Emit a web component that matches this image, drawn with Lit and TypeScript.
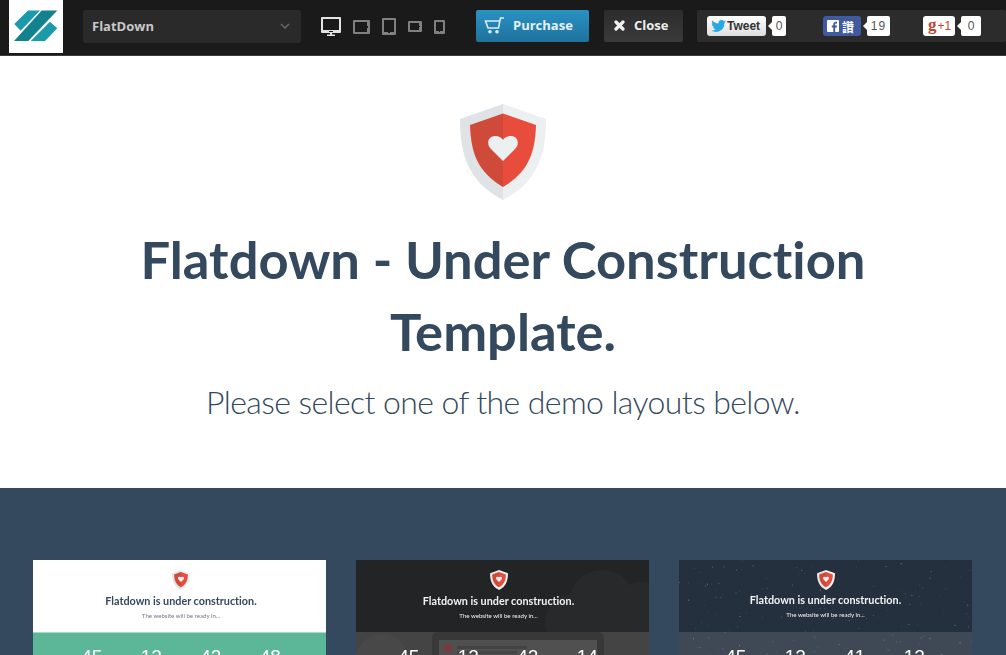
import { LitElement, html, css, svg } from "lit";
import { customElement } from "lit/decorators.js";

const shield = (w: number, h: number, outerL = "#dfe3e5", outerR = "#ecf0f1") => svg`
<svg class="shield" width=${w} height=${h} viewBox="0 0 86 96">
  <path d="M43 0 L0 15 C0 50 8 78 43 96 Z" fill=${outerL}/>
  <path d="M43 0 L86 15 C86 50 78 78 43 96 Z" fill=${outerR}/>
  <path d="M43 9.500 L10 21 C11 50 18 68 43 83 Z" fill="#d04a3a"/>
  <path d="M43 9.500 L76 21 C75 50 68 68 43 83 Z" fill="#e74c3c"/>
  <path d="M43 57 L31 45 C26 40 28 32 35 32 C39 32 42 34 43 36 C44 34 47 32 51 32 C58 32 60 40 55 45 Z" fill="#ecf0f1"/>
</svg>`;

const device = (w: number, h: number, dotX: number, dotY: number, dw: number, dh: number) => svg`
<svg width=${w} height=${h} viewBox="0 0 ${w} ${h}">
  <rect width=${w} height=${h} rx="1" fill="#808080"/>
  <rect x="2" y="2" width=${dotX >= w - 3 ? w - 5 : w - 4} height=${dotY >= h - 3 ? h - 5 : h - 4} fill="#1a1a1a"/>
  <rect x=${dotX} y=${dotY} width=${dw} height=${dh} fill="#1a1a1a"/>
</svg>`;

const stars = () => {
  let s = 17;
  const r = () => (s = (s * 16807) % 2147483647) / 2147483647;
  const dots = Array.from({ length: 170 }, () => ({ x: r() * 293, y: r() * 95, o: 0.08 + r() * 0.3, d: 0.3 + r() * 0.35 }));
  return svg`<svg class="stars" width="293" height="95" viewBox="0 0 293 95">
    ${dots.map((p) => svg`<circle cx=${p.x} cy=${p.y} r=${p.d} fill="#fff" opacity=${p.o}/>`)}
  </svg>`;
};

@customElement("app-root")
export class AppRoot extends LitElement {
  static styles = css`
    :host { display: block; height: 655px; overflow: hidden; font-family: "Lato", sans-serif; background: #fff; }
    .bar { height: 56px; box-sizing: border-box; background: #1a1a1a; border-bottom: 1px solid #3c3c3c; display: flex; align-items: flex-start; padding-left: 9px; font-family: "Open Sans", sans-serif; }
    .logo { width: 54px; height: 53px; background: #fff; flex: none; }
    .logo svg { display: block; }
    .select { width: 218px; height: 33px; margin: 10px 0 0 20px; padding: 0 11px 2px 9px; box-sizing: border-box; background: #2a2a2a; border-radius: 3px; color: #c8c8c8; font-size: 13px; font-weight: 700; display: flex; align-items: center; justify-content: space-between; }
    .devices { display: flex; align-items: center; gap: 12px; height: 35px; margin: 9px 0 0 20px; width: 155px; flex: none; }
    .devices svg { display: block; flex: none; }
    .btn { height: 32px; margin-top: 10px; padding-bottom: 2px; box-sizing: border-box; border-radius: 2px; color: #eee; font-size: 13px; font-weight: 700; display: flex; align-items: center; flex: none; }
    .purchase { width: 113px; background: linear-gradient(#2a92c4, #1f729c); padding-left: 8px; gap: 9px; color: #e6f0f5; }
    .close { width: 79px; background: linear-gradient(#2c2c2c, #3a3a3a); margin-left: 15px; padding-left: 10px; gap: 9px; }
    .share { width: 309px; height: 32px; margin: 10px 0 0 14px; background: #2c2c2c; border-radius: 2px; flex: none; font-family: "Liberation Sans", sans-serif; display: flex; align-items: center; padding-left: 10px; box-sizing: border-box; }
    .sb { height: 20px; border-radius: 3px; display: flex; align-items: center; box-sizing: border-box; flex: none; }
    .tw { width: 59px; background: linear-gradient(#fff, #dedede); color: #333; font-size: 12px; font-weight: 700; gap: 1px; padding-left: 4px; }
    .fb { width: 38px; background: #3f5a9e; color: #fff; font-size: 12px; gap: 3px; padding-left: 4px; margin-left: 37px; font-family: "Noto Sans CJK TC", sans-serif; font-weight: 700; }
    .gp { width: 32px; background: #fff; color: #c8402f; font-size: 12px; padding-left: 5px; margin-left: 33px; gap: 1px; }
    .gp b { font-family: "Liberation Serif", serif; font-weight: 700; font-size: 17px; line-height: 16px; margin-top: -3px; }
    .count { height: 20px; background: #fff; border-radius: 2px; color: #555; font-size: 12px; display: flex; align-items: center; justify-content: center; position: relative; box-sizing: border-box; flex: none; }
    .count::before { content: ""; position: absolute; left: -4px; top: 6px; border: 4px solid transparent; border-left: 0; border-right-color: #fff; }
    .c1 { width: 14px; margin-left: 6px; }
    .c2 { width: 23px; margin-left: 6px; letter-spacing: 1px; }
    .c3 { width: 20px; margin-left: 6px; }
    .hero { height: 432px; box-sizing: border-box; padding-top: 48px; text-align: center; color: #34495e; }
    .hero .shield { display: block; margin: 0 auto; }
    h1 { margin: 23px auto 0; font-size: 52.500px; line-height: 72px; font-weight: 700; width: 800px; font-variant-ligatures: none; }
    .sub { margin: 13px 0 0; font-size: 32px; line-height: 44px; font-weight: 300; letter-spacing: -0.6px; }
    .demos { background: #34495e; padding: 72px 34px 0 33px; height: 167px; box-sizing: border-box; display: flex; gap: 30px; overflow: hidden; }
    .card { width: 293px; flex: none; height: 300px; position: relative; overflow: hidden; text-align: center; }
    .top { height: 72px; box-sizing: border-box; padding-top: 10px; position: relative; }
    .top .shield { display: block; margin: 0 auto; filter: blur(.3px); }
    .title { font-size: 10.800px; font-weight: 700; line-height: 14px; margin-top: 4px; filter: blur(.3px); font-variant-ligatures: none; }
    .tag { font-size: 6.100px; line-height: 8px; font-weight: 400; margin-top: 4px; filter: blur(.25px); }
    .nums { height: 228px; display: flex; padding-top: 14px; box-sizing: border-box; font-family: "Liberation Sans", sans-serif; font-size: 19px; line-height: 22px; color: #fff; font-weight: 400; position: relative; }
    .nums span { width: 59.500px; text-align: center; position: relative; filter: blur(.3px); }
    .c-a { background: #fff; }
    .c-a .top { color: #34495e; padding-left: 3px; }
    .c-a .tag { color: #778; }
    .c-a .nums { background: #5cb798; border-top: 1px solid #a8dcc8; padding-top: 13px; padding-left: 29px; }
    .c-b { background: #222426; }
    .c-b .top, .c-c .top { color: #f2f2f2; }
    .c-b .top { padding-right: 8px; }
    .c-b .nums { background: #444; padding-left: 23px; }
    .cloud { position: absolute; border-radius: 50%; background: #28292b; }
    .cl1 { width: 66px; height: 66px; left: 213px; top: 10px; }
    .cl2 { width: 56px; height: 56px; left: 189px; top: 34px; }
    .cl3 { width: 60px; height: 60px; left: 256px; top: 22px; }
    .cl4 { width: 56px; height: 60px; left: -2px; top: 2px; background: #484848; }
    .tablet { position: absolute; left: 76px; top: 0; width: 172px; height: 120px; background: #383838; border-radius: 6px 6px 0 0; }
    .screen { position: absolute; left: 7px; top: 8px; right: 7px; height: 110px; background: #505050; filter: blur(.3px); }
    .red { position: absolute; left: 5px; top: 5px; width: 8px; height: 7px; background: #7a3a3a; }
    .ln { position: absolute; left: 18px; top: 6px; width: 70px; height: 3px; background: #444; }
    .ln2 { top: 11px; width: 60px; }
    .c-c { background: #25303e; }
    .stars { position: absolute; left: 0; top: 0; }
    .c-c .title { margin-top: 3px; }
    .c-c .nums { background: rgba(255,255,255,.12); padding-left: 27px; }
  `;

  private card(cls: string, nums: string[], extra: unknown = null) {
    return html`<div class="card ${cls}">
      ${extra}
      <div class="top">
        ${shield(18, 20, cls === "c-a" ? "#dfe3e5" : "#e6e8ea", cls === "c-a" ? "#ecf0f1" : "#f4f5f6")}
        <div class="title">Flatdown is under construction.</div>
        <div class="tag">The website will be ready in...</div>
      </div>
      <div class="nums">
        ${cls === "c-b" ? html`<div class="tablet"><div class="screen"><div class="red"></div><div class="ln"></div><div class="ln ln2"></div></div></div><div class="cloud cl4"></div>` : null}
        ${nums.map((n) => html`<span>${n}</span>`)}
      </div>
    </div>`;
  }

  render() {
    return html`
      <div class="bar">
        <div class="logo">
          <svg width="54" height="53" viewBox="0 0 54 53">
            <path d="M5.300 24 L19 10.500 L31 10.500 L11.700 30.700 Z" fill="#1a9aaa"/>
            <path d="M5 41 L32.700 10.500 L48.300 10.500 L19.300 41 Z" fill="#14818e"/>
            <path d="M21.700 41 L41 21.700 L48.300 28.300 L36 41 Z" fill="#1a9aaa"/>
          </svg>
        </div>
        <div class="select">FlatDown
          <svg width="10" height="6" viewBox="0 0 10 6"><path d="M1 1 L5 5 L9 1" fill="none" stroke="#666" stroke-width="1.500"/></svg>
        </div>
        <div class="devices">
          <svg width="20" height="19" viewBox="0 0 20 19"><rect width="20" height="16" rx="1" fill="#e4e4e4"/><rect x="2" y="2" width="16" height="11" fill="#1a1a1a"/><rect x="8" y="14" width="4" height="1" fill="#1a1a1a"/><path d="M9 16h2v1.500h3V19H6v-1.500h3z" fill="#e4e4e4"/></svg>
          ${device(17, 14, 14, 6, 1, 2)}
          ${device(14, 17, 6, 14, 2, 1)}
          ${device(14, 11, 11, 5, 1, 1)}
          ${device(11, 14, 5, 11, 1, 1)}
        </div>
        <div class="btn purchase">
          <svg width="20" height="17" viewBox="0 0 20 17"><path d="M20 1 L16.500 1 L14.500 11 L4 11 L1.500 4 L16 4" fill="none" stroke="#d8edf6" stroke-width="1.600"/><circle cx="6" cy="14.800" r="1.800" fill="#d8edf6"/><circle cx="13" cy="14.800" r="1.800" fill="#d8edf6"/></svg>
          Purchase
        </div>
        <div class="btn close">
          <svg width="11" height="11" viewBox="0 0 11 11"><path d="M2 2 L9 9 M9 2 L2 9" stroke="#f0f0f0" stroke-width="3.200" stroke-linecap="round"/></svg>
          Close
        </div>
        <div class="share">
          <div class="sb tw">
            <svg width="15" height="12" viewBox="0 0 15 12"><path d="M15 1.500c-.5.300-1.100.400-1.700.500.600-.4 1.100-1 1.300-1.700-.6.300-1.200.600-1.900.700A3 3 0 0 0 7.500 3.500C5 3.400 2.800 2.200 1.300.500c-.8 1.400-.4 3.100.9 4-.5 0-1-.1-1.300-.4 0 1.500 1 2.700 2.400 3-.4.100-.9.100-1.300 0 .4 1.200 1.500 2 2.800 2.100A6 6 0 0 1 .300 10.500 8.500 8.500 0 0 0 13.400 3c.6-.4 1.200-.9 1.600-1.500z" fill="#2aa9e0"/></svg>
            Tweet
          </div>
          <div class="count c1">0</div>
          <div class="sb fb">
            <svg width="12" height="12" viewBox="0 0 11 11"><rect width="11" height="11" rx="1" fill="#fff"/><path d="M7.500 11V6.800h1.400l.2-1.700H7.500V4c0-.5.200-.8.800-.8h.9V1.700C9 1.700 8.500 1.600 8 1.600c-1.300 0-2.200.8-2.200 2.200v1.300H4.400v1.700h1.400V11z" fill="#3f5a9e"/></svg>
            讚
          </div>
          <div class="count c2">19</div>
          <div class="sb gp"><b>g</b>+1</div>
          <div class="count c3">0</div>
        </div>
      </div>
      <div class="hero">
        ${shield(86, 96)}
        <h1>Flatdown - Under Construction Template.</h1>
        <p class="sub">Please select one of the demo layouts below.</p>
      </div>
      <div class="demos">
        ${this.card("c-a", ["45", "12", "42", "48"])}
        ${this.card("c-b", ["45", "12", "42", "14"], html`<div class="cloud cl1"></div><div class="cloud cl2"></div><div class="cloud cl3"></div>`)}
        ${this.card("c-c", ["45", "12", "41", "12"], stars())}
      </div>
    `;
  }
}
